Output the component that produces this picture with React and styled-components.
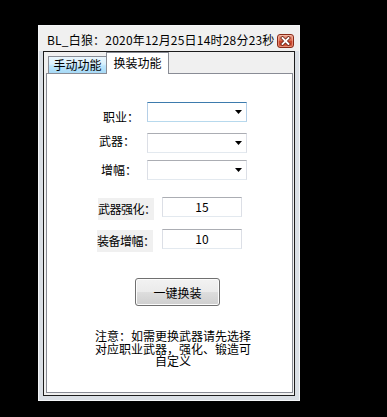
import React from "react";
import styled, { createGlobalStyle } from "styled-components";

const GlobalStyle = createGlobalStyle`
  html, body {
    margin: 0;
    padding: 0;
    background: #000;
  }
  body {
    font-family: "Noto Sans CJK SC", "Noto Sans", sans-serif;
    font-size: 12px;
    color: #000;
  }
`;

const Screen = styled.div`
  width: 387px;
  height: 417px;
  box-sizing: border-box;
  padding: 25px 0 0 38px;
  background: #000;
`;

const Window = styled.div`
  width: 262px;
  height: 376px;
  box-sizing: border-box;
  border: 1px solid #f4f6f8;
  background: linear-gradient(#f0f0f0 0, #f0f0f0 25px, #dadfe5 25px);
  display: flex;
  flex-direction: column;
`;

const TitleBar = styled.div`
  height: 25px;
  flex: none;
  box-sizing: border-box;
  padding: 6px 5px 0 8px;
  display: flex;
  justify-content: space-between;
  align-items: flex-start;
`;

const Title = styled.span`
  font-size: 12px;
  line-height: 16px;
  letter-spacing: 0.2px;
  white-space: nowrap;
`;

const CloseButton = styled.div`
  margin-top: 2px;
  width: 17px;
  height: 14px;
  box-sizing: border-box;
  border: 1px solid #8a2a18;
  border-radius: 3px;
  background: linear-gradient(#eda48f 0%, #dc6a4f 45%, #c9412a 55%, #d45c3e 100%);
  box-shadow: inset 0 0 0 1px rgba(255, 210, 195, 0.45);
  display: flex;
  align-items: center;
  justify-content: center;
`;

const Panel = styled.div`
  flex: 1;
  margin: 0 4px 4px;
  border: 1px solid #1c1c1c;
  background: #f0f0f0;
  padding: 0 1px 2px 2px;
  display: flex;
  flex-direction: column;
`;

const TabStrip = styled.div`
  height: 21px;
  flex: none;
  padding-left: 2px;
  display: flex;
  align-items: flex-end;
  position: relative;
  z-index: 1;
`;

const Tab = styled.div`
  box-sizing: border-box;
  width: ${(p) => (p.$active ? 63 : 59)}px;
  height: ${(p) => (p.$active ? 22 : 17)}px;
  margin-left: ${(p) => (p.$active ? -1 : 0)}px;
  margin-bottom: ${(p) => (p.$active ? -1 : 0)}px;
  border: 1px solid #898c95;
  border-bottom: none;
  background: ${(p) =>
    p.$active
      ? "#fff"
      : "linear-gradient(#eaf6fd 0%, #d9f0fc 45%, #bee6fd 55%, #a7d9f5 100%)"};
  display: flex;
  align-items: center;
  justify-content: center;
  padding-bottom: ${(p) => (p.$active ? 2 : 0)}px;
  font-size: 12px;
  line-height: 14px;
`;

const Content = styled.div`
  flex: 1;
  background: #fff;
  border: 1px solid #898c95;
  display: flex;
  flex-direction: column;
  align-items: flex-start;
`;

const FieldRow = styled.div`
  width: ${(p) => p.$width}px;
  height: 20px;
  margin-top: ${(p) => p.$top}px;
  display: flex;
  align-items: flex-start;
  flex: none;
`;

const FieldLabel = styled.span`
  margin-left: ${(p) => p.$indent}px;
  margin-top: ${(p) => p.$shift}px;
  font-size: 12px;
  line-height: 12px;
  white-space: nowrap;
`;

const BoxLabel = styled.span`
  margin-left: ${(p) => p.$indent}px;
  margin-top: 1px;
  width: 56px;
  height: 22px;
  flex: none;
  background: #f0f0f0;
  font-size: 12px;
  line-height: 22px;
  letter-spacing: -0.5px;
  white-space: nowrap;
`;

const ComboBox = styled.div`
  margin-left: auto;
  width: 100px;
  height: 20px;
  box-sizing: border-box;
  border: 1px solid ${(p) => (p.$focused ? "#b5cfe7" : "#dcdfe6")};
  border-top-color: ${(p) => (p.$focused ? "#3d7bad" : "#abadb3")};
  border-bottom-color: ${(p) => (p.$focused ? "#b7d9ed" : "#e3e9ef")};
  background: #fff;
  display: flex;
  align-items: center;
  justify-content: flex-end;
  padding-right: 4px;
`;

const TextBox = styled.div`
  margin-left: auto;
  width: 80px;
  height: 20px;
  box-sizing: border-box;
  border: 1px solid #dcdfe6;
  border-top-color: #abadb3;
  border-bottom-color: #e3e9ef;
  background: #fff;
  text-align: center;
  font-size: 12px;
  line-height: 18px;
`;

const ActionButton = styled.button`
  margin: 29px 0 0 88px;
  width: 85px;
  height: 28px;
  flex: none;
  box-sizing: border-box;
  border: 1px solid #707070;
  border-radius: 3px;
  background: linear-gradient(#f2f2f2 0%, #ebebeb 48%, #dddddd 52%, #cfcfcf 100%);
  box-shadow: inset 0 0 0 1px #fcfcfc;
  font-family: "Noto Sans CJK SC", sans-serif;
  font-size: 12px;
  color: #000;
  padding: 0;
`;

const Note = styled.p`
  margin: 24px 0 0 47px;
  width: 158px;
  font-size: 12px;
  line-height: 12.5px;
  text-align: center;
`;

const Arrow = () => (
  <svg width="7" height="4" viewBox="0 0 7 4">
    <polygon points="0,0 7,0 3.5,4" fill="#000" />
  </svg>
);

const CloseGlyph = () => (
  <svg width="11" height="10" viewBox="0 0 11 10">
    <path d="M2.5 2 L8.5 8 M8.5 2 L2.5 8" stroke="#6a2417" strokeWidth="3.4" strokeLinecap="square" />
    <path d="M2.5 2 L8.5 8 M8.5 2 L2.5 8" stroke="#fff" strokeWidth="1.8" strokeLinecap="square" />
  </svg>
);

const selects = [
  { label: "职业：", top: 28, indent: 56, shift: 9, focused: true },
  { label: "武器：", top: 11, indent: 52, shift: 2, focused: false },
  { label: "增幅：", top: 7, indent: 54, shift: 4, focused: false },
];

const inputs = [
  { label: "武器强化：", top: 17, indent: 51, value: "15" },
  { label: "装备增幅：", top: 12, indent: 50, value: "10" },
];

export default function App() {
  return (
    <>
      <GlobalStyle />
      <Screen>
        <Window>
          <TitleBar>
            <Title>BL_白狼：2020年12月25日14时28分23秒</Title>
            <CloseButton>
              <CloseGlyph />
            </CloseButton>
          </TitleBar>
          <Panel>
            <TabStrip>
              <Tab>手动功能</Tab>
              <Tab $active>换装功能</Tab>
            </TabStrip>
            <Content>
              {selects.map((s) => (
                <FieldRow key={s.label} $width={200} $top={s.top}>
                  <FieldLabel $indent={s.indent} $shift={s.shift}>
                    {s.label}
                  </FieldLabel>
                  <ComboBox $focused={s.focused}>
                    <Arrow />
                  </ComboBox>
                </FieldRow>
              ))}
              {inputs.map((f) => (
                <FieldRow key={f.label} $width={195} $top={f.top}>
                  <BoxLabel $indent={f.indent}>{f.label}</BoxLabel>
                  <TextBox>{f.value}</TextBox>
                </FieldRow>
              ))}
              <ActionButton>一键换装</ActionButton>
              <Note>注意：如需更换武器请先选择对应职业武器，强化、锻造可自定义</Note>
            </Content>
          </Panel>
        </Window>
      </Screen>
    </>
  );
}
